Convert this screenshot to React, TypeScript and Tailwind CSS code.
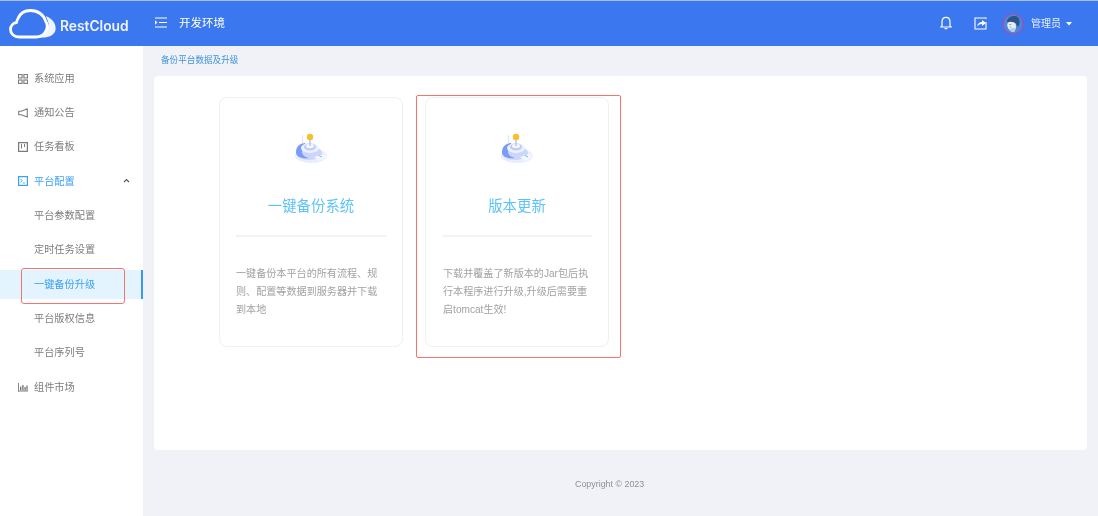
import React from "react";

const CJK = "font-['Liberation_Sans','Noto_Sans_CJK_SC',sans-serif]";

function Logo() {
  return (
    <svg width="48" height="36" viewBox="0 0 48 36" fill="none">
      <path d="M37 10 C44 13 47.5 18.5 46.5 24 C45.5 29 40 31.5 34 31.5 L27 31.5 C34.5 29.5 39.5 24 39.5 17 Z" fill="#fff" opacity="0.92" />
      <path d="M10 31 C5 31 1.5 27.5 1.5 23.5 C1.5 20 4 17 7.5 16.5 C8 15 8 14 9 12.5 C11 7.5 16 4.5 21.5 4.5 C29 4.5 35 9 36.5 15 C38.5 18 38.5 22 37 25 C35 29 31 31 27 31 Z"
        stroke="#fff" strokeWidth="2.8" strokeLinejoin="round" fill="#3b78f0" />
    </svg>
  );
}

function Illustration() {
  return (
    <svg width="36" height="32" viewBox="0 0 36 32">
      <ellipse cx="18" cy="23" rx="16" ry="7" fill="#e9edfe" />
      <ellipse cx="16" cy="20" rx="13" ry="7" fill="#ccd6fc" />
      <path d="M3 19 C3 13 8 10 12 10 L13 14 C10 15 9 17 9 19 C9 22 12 24 16 25 C9 26 3 24 3 19Z" fill="#7a9bf6" />
      <ellipse cx="17" cy="15" rx="9" ry="5" fill="#eef1ff" />
      <ellipse cx="17" cy="14" rx="6" ry="3.5" fill="#bfcafc" />
      <ellipse cx="17" cy="13" rx="4" ry="2.2" fill="#f5f7ff" />
      <rect x="16.4" y="6" width="1.2" height="7" fill="#a9b8f4" />
      <circle cx="17" cy="4" r="3.2" fill="#f5c02c" />
      <rect x="9" y="2" width="0.8" height="9" fill="#d3dbfc" />
      <path d="M21 24 L31 21 L35 24 L26 28 Z" fill="#f4f6ff" />
      <path d="M26 22.5 L29 24" stroke="#5fd3c8" strokeWidth="1" />
    </svg>
  );
}

function Avatar() {
  return (
    <svg width="22" height="22" viewBox="0 0 22 22" className="shrink-0">
      <circle cx="11" cy="11" r="11" fill="#7f5cc9" />
      <circle cx="11" cy="11" r="9.4" fill="#4f86d8" />
      <path d="M5 8 C6 4 11 2 15 3.5 C18 5.5 18.5 10 16 14 C15 11 12 9 9 9 L6 10 Z" fill="#2b5587" />
      <path d="M6 9.5 C8 8 12 9 13.5 10.5 C14.5 13 14 16 12.5 18.5 C10 19.5 7.5 18 6 15 C5 13 5 11 6 9.5Z" fill="#e6ecf3" />
      <path d="M7 16 C9 15 11.5 15 13.5 15 L12.5 18.5 C10.5 19.5 8 18.5 7 16Z" fill="#b5cbe2" />
      <path d="M7 11.5 H9.5 M7.5 14 H9.5" stroke="#7c93b2" strokeWidth="0.7" />
    </svg>
  );
}

const icons: Record<string, React.ReactNode> = {
  apps: (
    <svg width="10" height="10" viewBox="0 0 10 10" fill="none" stroke="currentColor" strokeWidth="1.1">
      <rect x="0.5" y="0.5" width="3.6" height="3.4" /><rect x="5.9" y="0.5" width="3.6" height="3.4" />
      <rect x="0.5" y="6" width="3.6" height="3.4" /><rect x="5.9" y="6" width="3.6" height="3.4" />
    </svg>
  ),
  notice: (
    <svg width="10" height="10" viewBox="0 0 10 10" fill="none" stroke="currentColor" strokeWidth="1.1">
      <path d="M9.3 0.8 V9 L3.2 6.8 H0.7 V3.2 H3.2 Z" strokeLinejoin="round" />
    </svg>
  ),
  board: (
    <svg width="10" height="10" viewBox="0 0 10 10" fill="none" stroke="currentColor" strokeWidth="1.3">
      <rect x="0.6" y="0.6" width="8.8" height="8.8" /><path d="M3.5 2 V6.5 M6.5 2 V5" strokeWidth="1" />
    </svg>
  ),
  terminal: (
    <svg width="10" height="10" viewBox="0 0 10 10" fill="none" stroke="currentColor" strokeWidth="1.2">
      <rect x="0.6" y="0.6" width="8.8" height="8.8" /><path d="M2.5 3 L4.3 4.8 L2.5 6.6 M4.8 7 H6.8" strokeWidth="0.9" />
    </svg>
  ),
  chart: (
    <svg width="10" height="10" viewBox="0 0 10 10" fill="currentColor">
      <rect x="0" y="1" width="0.9" height="8.5" /><rect x="0" y="8.6" width="10" height="0.9" />
      <rect x="2" y="4.5" width="1.4" height="4" /><rect x="4.2" y="3" width="1.4" height="5.5" /><rect x="6.4" y="5" width="1.4" height="3.5" /><rect x="8.4" y="3.5" width="1.3" height="5" />
    </svg>
  ),
};

type Row = { label: string; icon?: string; active?: boolean; selected?: boolean; chevron?: boolean };

const rows: Row[] = [
  { label: "系统应用", icon: "apps" },
  { label: "通知公告", icon: "notice" },
  { label: "任务看板", icon: "board" },
  { label: "平台配置", icon: "terminal", active: true, chevron: true },
  { label: "平台参数配置" },
  { label: "定时任务设置" },
  { label: "一键备份升级", selected: true },
  { label: "平台版权信息" },
  { label: "平台序列号" },
  { label: "组件市场", icon: "chart" },
];

function MenuRow({ row }: { row: Row }) {
  const blue = row.active || row.selected;
  return (
    <div className={`relative flex h-[29px] mb-[5.3px] items-center text-[10.2px] ${blue ? "text-[#3aa0f5]" : "text-[#7c7c7f]"} ${row.selected ? "bg-[#e4f4ff]" : ""}`}>
      {row.icon ? (
        <span className="flex w-[34px] justify-start pl-[18px]">{icons[row.icon]}</span>
      ) : (
        <span className="w-[34px]" />
      )}
      <span>{row.label}</span>
      {row.chevron && (
        <svg className="absolute left-[123px] top-[11px] text-[#555]" width="7" height="5" viewBox="0 0 7 5" fill="none" stroke="currentColor" strokeWidth="1.1">
          <path d="M1 4 L3.5 1.5 L6 4" />
        </svg>
      )}
      {row.selected && <span className="absolute right-0 top-0 h-full w-[2px] bg-[#3a98f5]" />}
      {row.selected && <span className="absolute left-[21px] top-[-2px] h-[36px] w-[104px] rounded-[3px] border-[1.5px] border-[#f6746e]" />}
    </div>
  );
}

function Card({ title, lines, marked }: { title: string; lines: string[]; marked?: boolean }) {
  return (
    <div className="relative flex h-[250px] w-[184px] flex-col items-center rounded-[8px] border border-[#f0f0f3] bg-white px-[16px]">
      <div className="mt-[35px]"><Illustration /></div>
      <div className="mt-[31px] text-[14.4px] leading-[20px] text-[#5cc3fa]">{title}</div>
      <div className="mt-[19px] h-[2px] w-full bg-[#f3f3f5]" />
      <div className={`mt-[28px] w-full text-[10.1px] leading-[18px] text-[#a2a2a6] ${marked ? "pl-px" : ""}`}>
        {lines.map((l) => <div key={l} className="whitespace-nowrap">{l}</div>)}
      </div>
      {marked && <span className="absolute left-[-10px] top-[-3px] h-[263px] w-[205px] rounded-[2px] border-[1.5px] border-[#f6746e]" />}
    </div>
  );
}

export default function App() {
  return (
    <div className={`flex h-[516px] w-[1098px] flex-col overflow-hidden bg-[#f0f2f7] blur-[0.35px] ${CJK}`}>
      <header className="flex h-[46px] shrink-0 items-center border-t border-[#a9bde8] bg-[#3b78f0] text-white">
        <div className="ml-[9px]"><Logo /></div>
        <span className="ml-[3px] mt-[6px] w-[70px] whitespace-nowrap font-['Inter',sans-serif] text-[13.8px] font-semibold text-[#eef3ff]">RestCloud</span>
        <svg className="ml-[25px] mb-[2px]" width="12" height="11" viewBox="0 0 12 11" fill="none" stroke="#fff" strokeWidth="1">
          <path d="M0 1 H12 M4 5.5 H12 M0 10 H12" /><path d="M0 3.5 L2 5.5 L0 7.5 Z" fill="#fff" strokeWidth="0.5" />
        </svg>
        <span className="ml-[12px] text-[11.5px]">开发环境</span>
        <div className="ml-auto flex items-center pr-[26px]">
          <svg className="mb-[2px]" width="14" height="14" viewBox="0 0 14 14" fill="none" stroke="#fff" strokeWidth="1.2">
            <path d="M3 10 V6 C3 3.2 4.8 1.3 7 1.3 C9.2 1.3 11 3.2 11 6 V10 L12.2 11 H1.8 Z" strokeLinejoin="round" />
            <path d="M5.6 12.6 H8.4" />
          </svg>
          <svg className="ml-[21px]" width="13" height="13" viewBox="0 0 13 13" fill="none" stroke="#fff" strokeWidth="1.1">
            <path d="M12 5 V12 H1 V1 H12 V2" />
            <path d="M3 9.5 C3.5 6.5 5.5 5 8 5 V3 L12 6 L8 9 V7 C6 7 4.5 7.8 3 9.5Z" fill="#fff" stroke="none" />
          </svg>
          <span className="ml-[15px]"><Avatar /></span>
          <span className="ml-[7px] text-[10px] text-[#e8efff]">管理员</span>
          <svg className="ml-[5px]" width="6" height="4" viewBox="0 0 6 4"><path d="M0 0 H6 L3 3.5 Z" fill="#fff" /></svg>
        </div>
      </header>
      <div className="flex min-h-0 flex-1">
        <aside className="w-[143px] shrink-0 bg-white pt-[18px]">
          {rows.map((r) => <MenuRow key={r.label} row={r} />)}
        </aside>
        <main className="flex min-w-0 flex-1 flex-col">
          <div className="ml-[18px] mt-[8px] h-[12px] text-[8.6px] leading-[12px] text-[#3f93dc]">备份平台数据及升级</div>
          <section className="ml-[11px] mr-[11px] mt-[10px] flex h-[374px] gap-[22px] rounded-[4px] bg-white pl-[65px] pt-[21px]">
            <Card title="一键备份系统" lines={["一键备份本平台的所有流程、规", "则、配置等数据到服务器并下载", "到本地"]} />
            <Card marked title="版本更新" lines={["下载并覆盖了新版本的Jar包后执", "行本程序进行升级,升级后需要重", "启tomcat生效!"]} />
          </section>
          <footer className="mt-[28px] pl-[432px] text-[8.9px] leading-[12px] text-[#8f9094]">Copyright © 2023</footer>
        </main>
      </div>
    </div>
  );
}
